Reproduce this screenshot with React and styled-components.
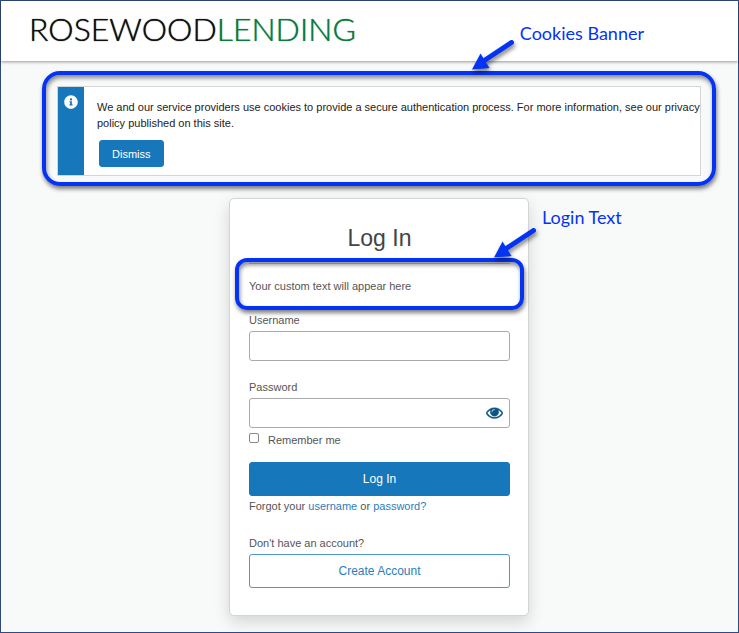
import React, {useState} from 'react';
import styled, {createGlobalStyle} from 'styled-components';
import {FaInfoCircle} from 'react-icons/fa';

const Blue = '#1777bb';
const LinkBlue = '#2b7dbd';
const MarkerBlue = '#0433f5';
const Frame = '#2f4b7f';

const Arrow = () => (
  <svg width="52" height="40" viewBox="0 0 52 40" aria-hidden="true">
    <path d="M42.5 6.5 L16 24" stroke={MarkerBlue} strokeWidth="5" strokeLinecap="round" />
    <path d="M3 33.5 L11.5 17.5 L20.5 32 Z" fill={MarkerBlue} />
  </svg>
);

const EyeIcon = () => (
  <svg width="17" height="17" viewBox="0 0 1792 1792" fill="#0b5586" aria-hidden="true">
    <path d="M1664 960q-152-236-381-353 61 104 61 225 0 185-131.5 316.5t-316.5 131.5-316.5-131.5-131.5-316.5q0-121 61-225-229 117-381 353 133 205 333.5 326.5t434.5 121.5 434.5-121.5 333.5-326.5zm-720-384q0-20-14-34t-34-14q-125 0-214.5 89.5t-89.5 214.5q0 20 14 34t34 14 34-14 14-34q0-86 61-147t147-61q20 0 34-14t14-34zm848 384q0 34-20 69-140 230-376.5 368.5t-499.5 138.5-499.5-139-376.5-368q-20-35-20-69t20-69q140-229 376.5-368t499.5-139 499.5 139 376.5 368q20 35 20 69z" stroke="#0b5586" strokeWidth="40" />
  </svg>
);

const App = () => {
  const [showCookies, setShowCookies] = useState(true);
  const [showPassword, setShowPassword] = useState(false);

  return (
    <Page>
      <GlobalStyle />
      <Header>
        <Logo>
          ROSEWOOD<span>LENDING</span>
        </Logo>
      </Header>

      <Main>
        {showCookies && (
          <CookieSection>
            <Banner>
              <BannerSide>
                <FaInfoCircle size={14} />
              </BannerSide>
              <BannerContent>
                <p>
                  We and our service providers use cookies to provide a secure authentication
                  process. For more information, see our privacy policy published on this site.
                </p>
                <DismissButton type="button" onClick={() => setShowCookies(false)}>
                  Dismiss
                </DismissButton>
              </BannerContent>
            </Banner>
            <BannerOutline />
            <BannerArrow>
              <Arrow />
            </BannerArrow>
            <BannerCaption>Cookies Banner</BannerCaption>
          </CookieSection>
        )}

        <Card onSubmit={(e) => e.preventDefault()}>
          <Title>Log In</Title>
          <CustomText>
            <p>Your custom text will appear here</p>
            <TextOutline />
            <TextArrow>
              <Arrow />
            </TextArrow>
            <TextCaption>Login Text</TextCaption>
          </CustomText>

          <Field>
            <label htmlFor="username">Username</label>
            <Input id="username" type="text" />
          </Field>
          <Field>
            <label htmlFor="password">Password</label>
            <PasswordBox>
              <Input id="password" type={showPassword ? 'text' : 'password'} />
              <EyeButton
                type="button"
                aria-label="Show password"
                onClick={() => setShowPassword(!showPassword)}
              >
                <EyeIcon />
              </EyeButton>
            </PasswordBox>
          </Field>
          <Remember>
            <input id="remember" type="checkbox" />
            <label htmlFor="remember">Remember me</label>
          </Remember>

          <Button type="submit" $primary>
            Log In
          </Button>
          <Forgot>
            Forgot your <a href="#username">username</a> or <a href="#password">password?</a>
          </Forgot>
          <SignUpText>Don't have an account?</SignUpText>
          <Button type="button">Create Account</Button>
        </Card>
      </Main>
    </Page>
  );
};

const GlobalStyle = createGlobalStyle`
  * {
    box-sizing: border-box;
  }
  body {
    margin: 0;
    font-family: 'Liberation Sans', Arial, sans-serif;
    font-size: 11px;
    line-height: 16px;
    color: #555;
  }
  h1, p {
    margin: 0;
  }
  button, input {
    font-family: inherit;
  }
`;

const Page = styled.div`
  min-height: 100vh;
  border: 1px solid ${Frame};
  background-color: #f8fafa;
`;

const Header = styled.header`
  height: 60px;
  padding: 8px 28px;
  background-color: #fff;
  box-shadow: 0 1px 3px rgba(0, 0, 0, 0.4);
`;

const Logo = styled.div`
  font-family: Lato, sans-serif;
  font-weight: 300;
  font-size: 32px;
  line-height: 40px;
  color: #111;
  text-shadow: 0 0 1px currentColor;
  span {
    color: #0d7a3d;
  }
`;

const Main = styled.main`
  padding: 25px 37px 16px 56px;
`;

const CookieSection = styled.section`
  position: relative;
  margin-bottom: 22px;
`;

const Banner = styled.div`
  display: flex;
  border: 1px solid #d4d6d6;
  background-color: #fff;
`;

const BannerSide = styled.div`
  flex: 0 0 26px;
  display: flex;
  justify-content: center;
  padding-top: 8px;
  background-color: ${Blue};
  color: #fff;
`;

const BannerContent = styled.div`
  padding: 12px 0 8px 13px;
  color: #222;
`;

const DismissButton = styled.button`
  display: block;
  height: 27px;
  margin: 9px 2px 0;
  padding: 0 12px;
  border: 1px solid ${Blue};
  border-radius: 3px;
  background-color: ${Blue};
  color: #fff;
  font-size: 11px;
  cursor: pointer;
`;

const Outline = styled.div`
  position: absolute;
  border: 4px solid ${MarkerBlue};
  box-shadow: 1px 3px 4px rgba(0, 0, 0, 0.5), inset 1px 3px 4px rgba(0, 0, 0, 0.45);
  pointer-events: none;
`;

const BannerOutline = styled(Outline)`
  inset: -15px -15px -10px;
  border-radius: 18px;
`;

const TextOutline = styled(Outline)`
  inset: -6px -14px 2px;
  border-radius: 12px;
`;

const ArrowPlace = styled.div`
  position: absolute;
  pointer-events: none;
  svg {
    display: block;
    filter: drop-shadow(1px 3px 2px rgba(0, 0, 0, 0.5));
  }
`;

const BannerArrow = styled(ArrowPlace)`
  top: -50px;
  right: 180px;
`;

const TextArrow = styled(ArrowPlace)`
  top: -40px;
  left: 242px;
`;

const Caption = styled.span`
  position: absolute;
  font-family: Lato, 'Open Sans', sans-serif;
  font-size: 18px;
  line-height: 24px;
  color: ${MarkerBlue};
  white-space: nowrap;
`;

const BannerCaption = styled(Caption)`
  top: -65px;
  right: 57px;
`;

const TextCaption = styled(Caption)`
  top: -59px;
  left: 293px;
`;

const Card = styled.form`
  max-width: 300px;
  margin: 0 auto;
  padding: 26px 18px 27px 19px;
  border: 1px solid #d2d5d5;
  border-radius: 5px;
  background-color: #fff;
  box-shadow: 0 6px 16px rgba(0, 0, 0, 0.15);
`;

const Title = styled.h1`
  font-size: 23px;
  font-weight: 400;
  line-height: 26px;
  text-align: center;
  color: #444;
`;

const CustomText = styled.div`
  position: relative;
  margin-top: 12px;
  padding: 14px 0 18px;
  border-top: 1px solid #ccc;
`;

const Field = styled.div`
  margin-bottom: 18px;
  label {
    display: block;
    margin-bottom: 3px;
  }
  & + & {
    margin-bottom: 4px;
  }
`;

const Input = styled.input`
  display: block;
  width: 100%;
  height: 30px;
  padding: 0 8px;
  border: 1px solid #aaa;
  border-radius: 3px;
  background-color: #fff;
  font-size: 12px;
`;

const PasswordBox = styled.div`
  position: relative;
`;

const EyeButton = styled.button`
  position: absolute;
  top: 6px;
  right: 7px;
  display: flex;
  padding: 0;
  border: 0;
  background: none;
  cursor: pointer;
`;

const Remember = styled.div`
  display: flex;
  gap: 9px;
  margin-bottom: 14px;
  input {
    appearance: none;
    width: 10px;
    height: 10px;
    margin: 1px 0 0;
    border: 1px solid #888;
    border-radius: 2px;
    background-color: #fff;
  }
  input:checked {
    background-color: ${Blue};
  }
`;

const Button = styled.button`
  display: block;
  width: 100%;
  height: 34px;
  border: 1px solid ${({$primary}) => ($primary ? Blue : '#4f97cc')};
  border-radius: 3px;
  background-color: ${({$primary}) => ($primary ? Blue : '#fff')};
  color: ${({$primary}) => ($primary ? '#fff' : LinkBlue)};
  font-size: 12px;
  cursor: pointer;
`;

const Forgot = styled.p`
  margin: 2px 0 21px;
  a {
    color: ${LinkBlue};
    text-decoration: none;
  }
`;

const SignUpText = styled.p`
  margin-bottom: 3px;
`;

export default App;
